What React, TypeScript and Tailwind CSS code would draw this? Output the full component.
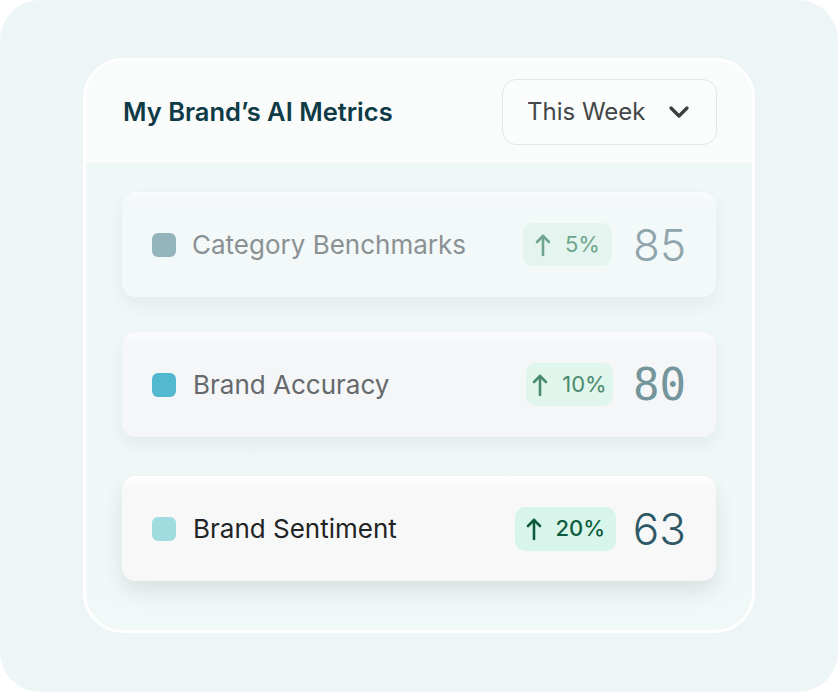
import { ChevronDown } from 'lucide-react';

const rows = [
  {
    label: 'Category Benchmarks',
    pct: '5%',
    value: '85',
    row: 'bg-[linear-gradient(180deg,#f9fbfc_0%,#f3f8f9_12%,#f3f8f9_100%)] shadow-[0_8px_18px_rgba(60,90,95,0.07)]',
    square: 'bg-[#94b4bb]',
    labelCls: 'text-[#8a9193] ml-[16px]',
    badge: 'bg-[#e3f5ee] text-[#6fa58f] w-[89px] h-[43px] font-normal',
    num: "text-[#8ea5ab] text-[44px] font-[350] font-['Inter',sans-serif] ml-[21px]",
    mt: '',
  },
  {
    label: 'Brand Accuracy',
    pct: '10%',
    value: '80',
    row: 'bg-[linear-gradient(180deg,#fafbfc_0%,#f5f6f8_12%,#f5f6f8_100%)] shadow-[0_8px_18px_rgba(60,90,95,0.08)]',
    square: 'bg-[#53b9cf]',
    labelCls: 'text-[#66696b] ml-[17px]',
    badge: 'bg-[#e0f5ec] text-[#4b8a6e] w-[87px] h-[43px] font-normal',
    num: "text-[#74959b] text-[44px] font-['DejaVu_Sans_Mono',monospace] ml-[20px]",
    mt: 'mt-[35px]',
  },
  {
    label: 'Brand Sentiment',
    pct: '20%',
    value: '63',
    row: 'bg-[linear-gradient(180deg,#ffffff_0%,#f8f8f9_12%,#f7f8f8_100%)] shadow-[0_10px_20px_rgba(40,60,65,0.12)]',
    square: 'bg-[#9fdbdf]',
    labelCls: 'text-[#222425] ml-[17px]',
    badge: 'bg-[#d8f5eb] text-[#0d5c3e] w-[101px] h-[44px] font-medium',
    num: "text-[#2e5866] text-[44px] font-[350] font-['Inter',sans-serif] ml-[17px]",
    mt: 'mt-[39px]',
  },
];

function UpArrow() {
  return (
    <svg width="16" height="24" viewBox="0 0 16 24" fill="none" stroke="currentColor" strokeWidth="2.6" strokeLinecap="round" strokeLinejoin="round">
      <path d="M8 22V3" />
      <path d="M2 9l6-6 6 6" />
    </svg>
  );
}

export default function App() {
  return (
    <div className="w-[838px] h-[692px] bg-white">
      <div className="w-[838px] h-[692px] rounded-[40px] bg-[#edf5f6] pt-[58px] pl-[83px] font-['Inter',sans-serif]">
        <div className="w-[672px] h-[575px] rounded-[40px] border-[3px] border-white overflow-hidden bg-[linear-gradient(180deg,#eff7f7_0%,#f1f8f8_100%)]">
          {/* Header */}
          <div className="h-[102px] bg-[#fafcfc] flex items-center justify-between pl-[37px] pr-[35px]">
            <h1 className="text-[25.5px] font-semibold text-[#0f3b47]">My Brand’s AI Metrics</h1>
            <button className="w-[215px] h-[66px] rounded-[14px] border border-[#e3e6ea] bg-[#fbfdfd] flex items-center justify-between pl-[24px] pr-[21px]">
              <span className="text-[24px] text-[#444648]">This Week</span>
              <ChevronDown size={32} strokeWidth={2.5} className="text-[#3c3e40]" />
            </button>
          </div>

          {/* Rows */}
          <div className="px-[36px] pt-[29px]">
            {rows.map((r) => (
              <div
                key={r.label}
                className={`h-[105px] rounded-[14px] flex items-center pl-[30px] pr-[30px] ${r.row} ${r.mt}`}
              >
                <span className={`w-[24px] h-[24px] rounded-[6px] shrink-0 ${r.square}`} />
                <span className={`text-[26px] ${r.labelCls}`}>{r.label}</span>
                <div className="flex-1" />
                <span className={`rounded-[10px] flex items-center justify-center gap-[14px] text-[22px] ${r.badge}`}>
                  <UpArrow />
                  {r.pct}
                </span>
                <span className={`leading-none ${r.num}`}>{r.value}</span>
              </div>
            ))}
          </div>
        </div>
      </div>
    </div>
  );
}
